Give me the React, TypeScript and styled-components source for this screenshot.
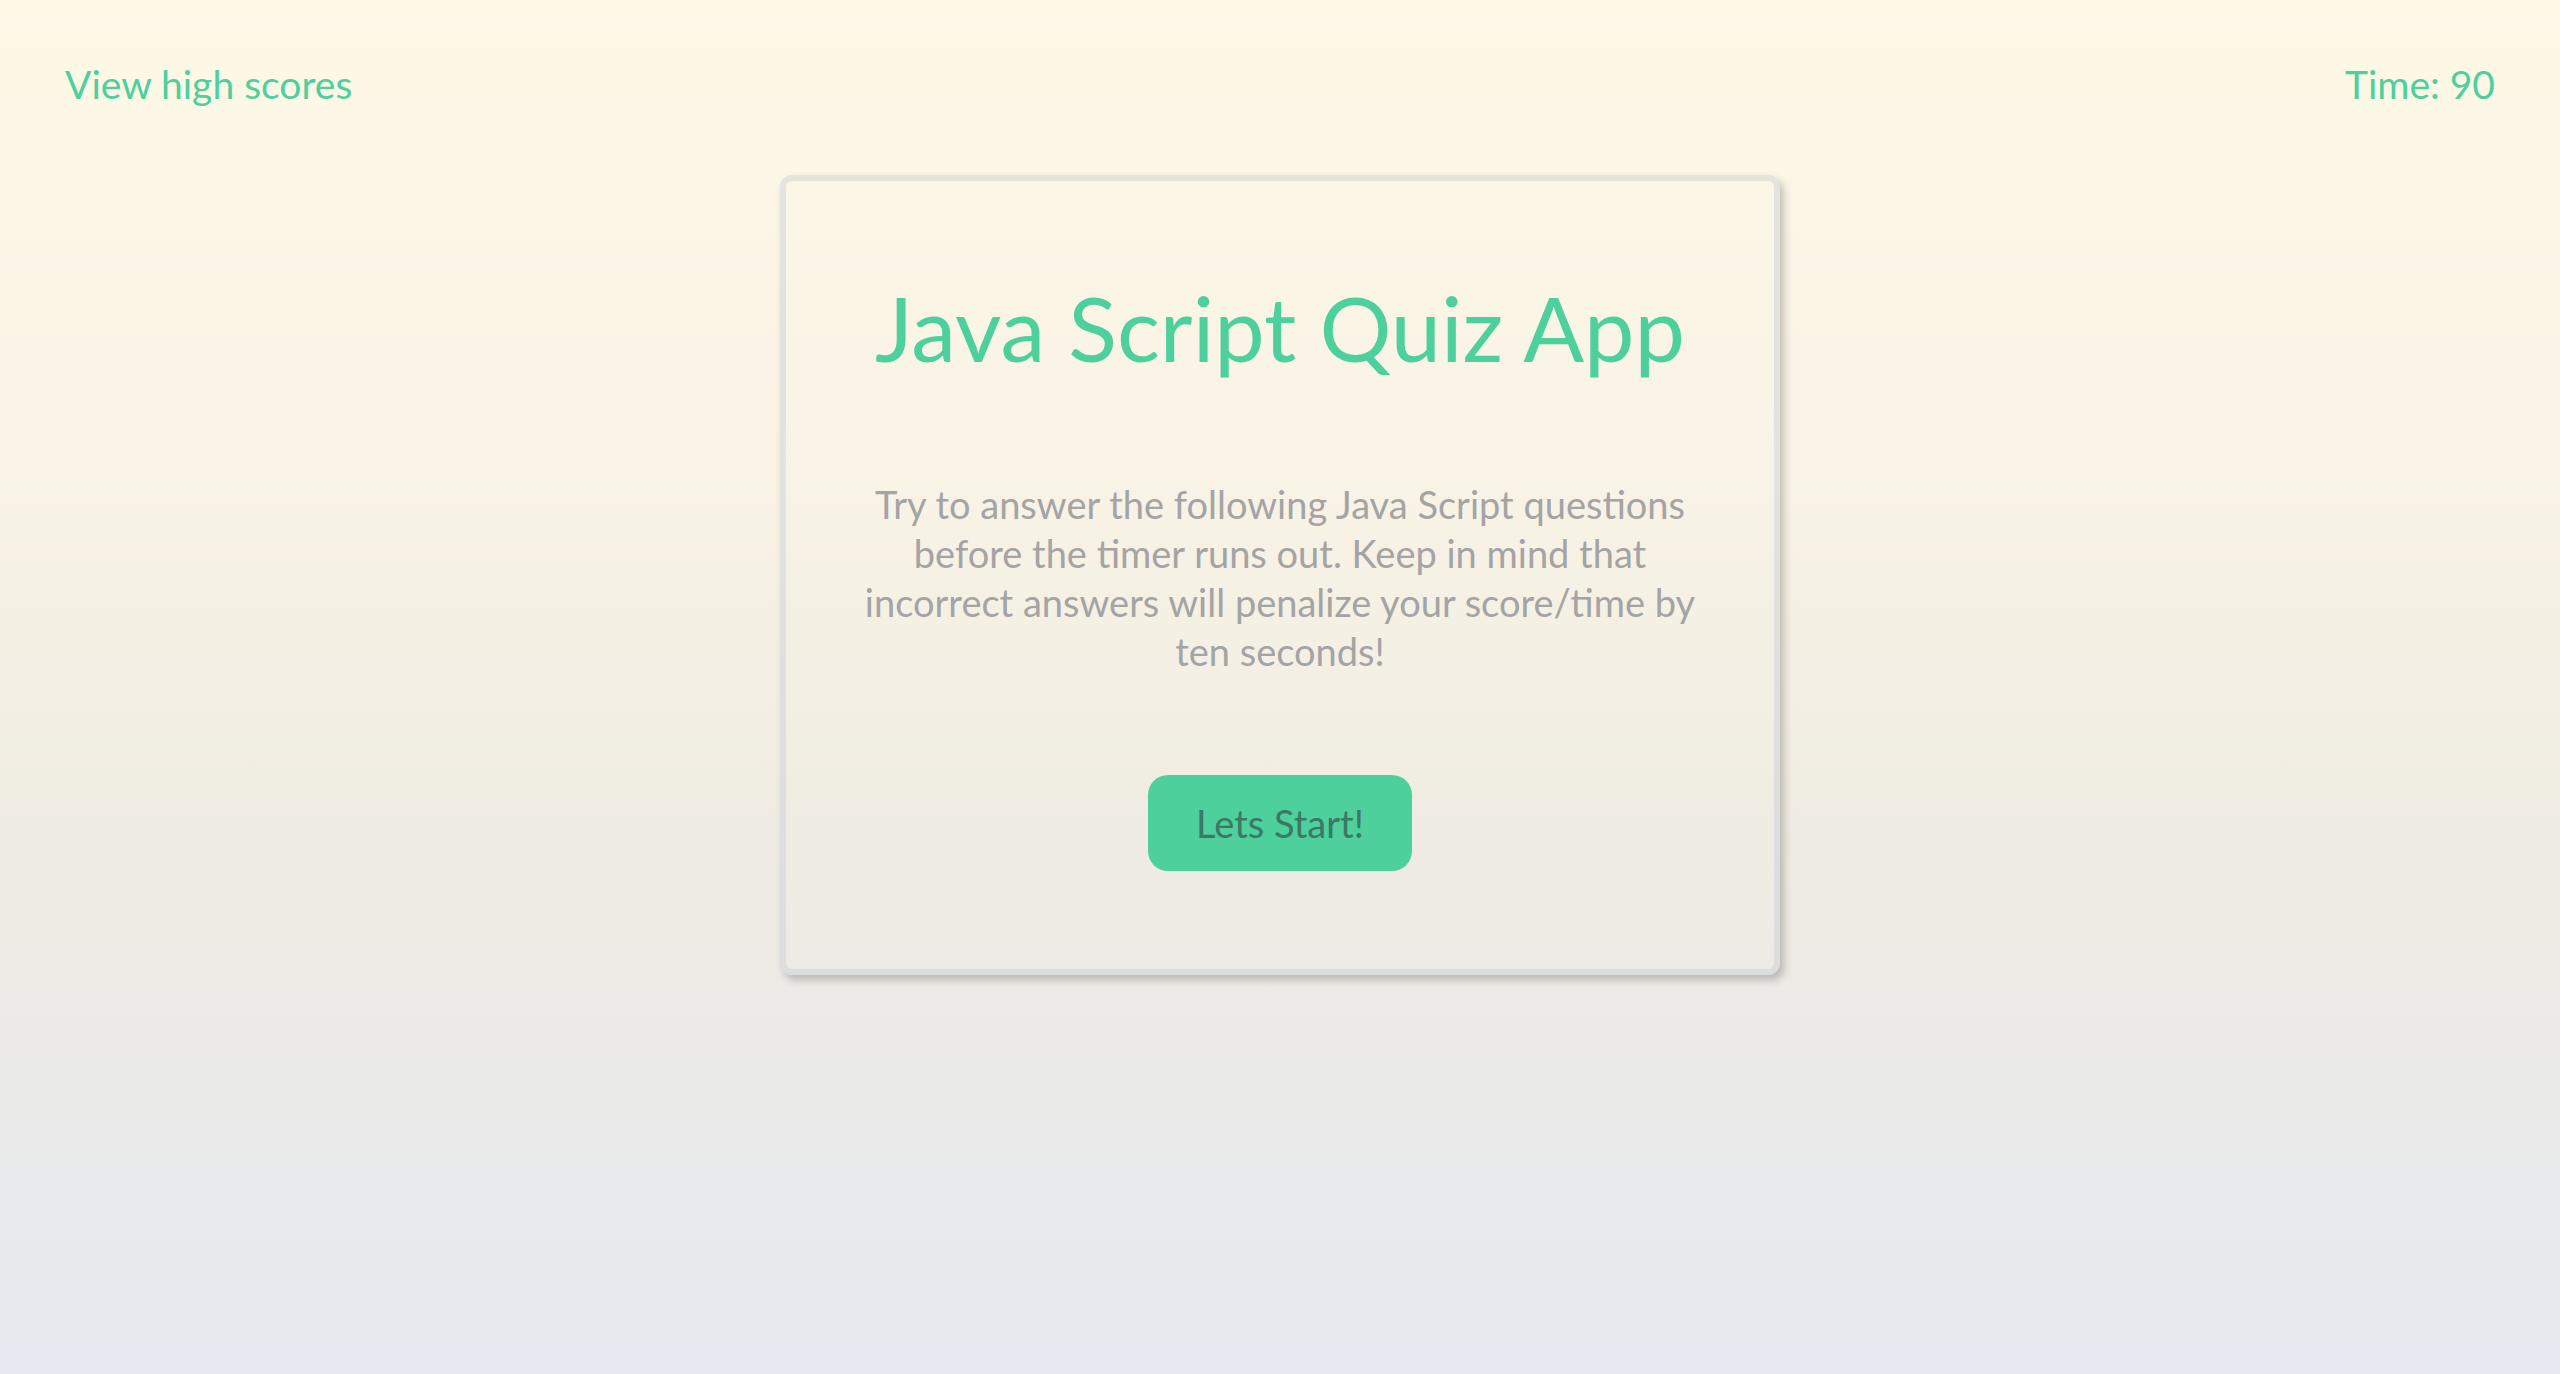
import React from "react";
import styled, { createGlobalStyle } from "styled-components";

const GlobalStyle = createGlobalStyle`
  html, body {
    margin: 0;
    padding: 0;
    min-height: 100%;
  }
  body {
    min-height: 1374px;
    background: linear-gradient(180deg, #fef8e7 0%, #f8f3e5 35%, #eeebe3 65%, #e5e9f0 100%);
    font-family: "Lato", "Open Sans", sans-serif;
  }
`;

const Page = styled.div`
  min-height: 1374px;
  display: flex;
  flex-direction: column;
`;

const Header = styled.header`
  display: flex;
  justify-content: space-between;
  align-items: center;
  padding: 60px 65px 0 65px;
`;

const HeaderText = styled.span`
  font-size: 39px;
  line-height: 48px;
  color: #4dd09c;
  cursor: pointer;
`;

const Card = styled.main`
  box-sizing: border-box;
  width: 1000px;
  margin: 67px auto 0 auto;
  border: 6px solid rgba(200, 206, 212, 0.45);
  border-radius: 12px;
  box-shadow: 4px 5px 8px rgba(0, 0, 0, 0.22);
  padding: 91px 60px 98px 60px;
  display: flex;
  flex-direction: column;
  align-items: center;
`;

const Title = styled.h1`
  margin: 0;
  font-size: 90px;
  font-weight: 400;
  line-height: 110px;
  color: #4dd09c;
  text-align: center;
`;

const Intro = styled.p`
  margin: 98px 0 0 0;
  max-width: 865px;
  font-size: 38px;
  line-height: 49px;
  color: #a4a4a4;
  text-align: center;
`;

const StartButton = styled.button`
  margin-top: 99px;
  width: 264px;
  height: 96px;
  border: none;
  border-radius: 20px;
  background: #4dd09c;
  color: #3c7864;
  font-family: "Lato", "Open Sans", sans-serif;
  font-size: 38px;
  cursor: pointer;
`;

export default function App() {
  return (
    <>
      <GlobalStyle />
      <Page>
        <Header>
          <HeaderText>View high scores</HeaderText>
          <HeaderText>Time: 90</HeaderText>
        </Header>
        <Card>
          <Title>Java Script Quiz App</Title>
          <Intro>
            Try to answer the following Java Script questions before the timer
            runs out. Keep in mind that incorrect answers will penalize your
            score/time by ten seconds!
          </Intro>
          <StartButton>Lets Start!</StartButton>
        </Card>
      </Page>
    </>
  );
}
